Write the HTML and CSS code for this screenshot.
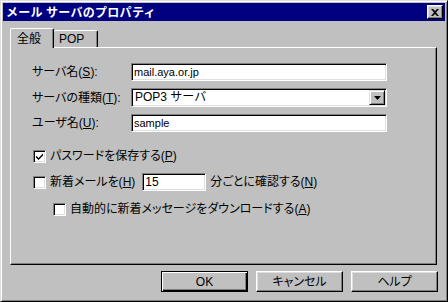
FILE: index.html
```html
<!DOCTYPE html>
<html lang="ja">
<head>
<meta charset="utf-8">
<link rel="stylesheet" href="styles.css">
</head>
<body>
<div class="window">
  <div class="titlebar">
    <span class="title">メール サーバのプロパティ</span>
    <span class="close"><svg width="8" height="7" viewBox="0 0 8 7"><path d="M0 0h2l2 2 2-2h2L5 3.5 8 7H6L4 5 2 7H0l3-3.5z" fill="#000"/></svg></span>
  </div>
  <div class="tabs">
    <div class="tab active">全般</div>
    <div class="tab">POP</div>
  </div>
  <div class="panel">
    <div class="fields">
      <span class="label">サーバ名(<u>S</u>):</span>
      <div class="input">mail.aya.or.jp</div>
      <span class="label">サーバの種類(<u>T</u>):</span>
      <div class="input select"><span class="seltext">POP3 サーバ</span><span class="drop"><svg width="7" height="4" viewBox="0 0 7 4"><path d="M0 0h7L3.5 4z" fill="#000"/></svg></span></div>
      <span class="label">ユーザ名(<u>U</u>):</span>
      <div class="input">sample</div>
    </div>
    <div class="check-row r1">
      <span class="box"><svg width="7" height="7" viewBox="0 0 7 7"><path d="M0 2.5l2.5 2.5L7 0.5v2L2.5 7 0 4.5z" fill="#000"/></svg></span>
      <span class="ctext">パスワードを保存する(<u>P</u>)</span>
    </div>
    <div class="check-row r2">
      <span class="box"></span>
      <span class="ctext">新着メールを(<u>H</u>)</span>
      <div class="input small">15</div>
      <span class="ctext after">分ごとに確認する(<u>N</u>)</span>
    </div>
    <div class="check-row r3">
      <span class="box"></span>
      <span class="ctext">自動的に新着メッセージをダウンロードする(<u>A</u>)</span>
    </div>
  </div>
  <div class="buttons">
    <div class="btn default"><span>OK</span></div>
    <div class="btn"><span class="jp">キャンセル</span></div>
    <div class="btn"><span class="jp">ヘルプ</span></div>
  </div>
</div>
</body>
</html>
```
FILE: styles.css
```css
* { box-sizing: border-box; }
html, body { margin: 0; padding: 0; background: #c0c0c0; }
body {
  font-family: "Liberation Sans", "Noto Sans CJK JP", sans-serif;
  font-size: 12px;
  color: #000;
}
.window {
  width: 448px;
  height: 302px;
  background: #c0c0c0;
  border: 1px solid;
  border-color: #dfdfdf #000 #000 #dfdfdf;
  box-shadow: inset 1px 1px #fff, inset -1px -1px #808080;
  padding: 2px;
  display: flex;
  flex-direction: column;
}
.titlebar {
  height: 18px;
  background: #000080;
  display: flex;
  align-items: center;
  justify-content: space-between;
  padding: 0 2px 0 3px;
}
.title {
  color: #fff;
  font-weight: bold;
  font-size: 12px;
  font-family: "Noto Sans CJK JP", sans-serif;
  line-height: 18px;
  letter-spacing: 0.3px;
}
.close {
  width: 16px;
  height: 14px;
  background: #c0c0c0;
  border: 1px solid;
  border-color: #fff #000 #000 #fff;
  box-shadow: inset -1px -1px #808080, inset 1px 1px #dfdfdf;
  display: flex;
  align-items: center;
  justify-content: center;
}
.close svg { display: block; }
.tabs {
  display: flex;
  align-items: flex-end;
  margin: 7px 0 0 7px;
  height: 19px;
  position: relative;
  z-index: 1;
}
.tab {
  height: 17px;
  border: 1px solid;
  border-bottom: none;
  border-color: #fff #000 #000 #fff;
  box-shadow: inset -1px 0 #808080;
  border-radius: 2px 2px 0 0;
  padding: 0 13px 0 5px;
  line-height: 16px;
  background: #c0c0c0;
}
.tab.active {
  height: 20px;
  margin-bottom: -1px;
  padding: 0 12px 0 6px;
  line-height: 17px;
  font-family: "Noto Sans CJK JP", sans-serif;
}
.tab.active + .tab { border-left: none; }
.panel {
  margin-left: 7px;
  width: 427px;
  height: 218px;
  border: 1px solid;
  border-color: #fff #000 #000 #fff;
  box-shadow: inset -1px -1px #808080;
  padding: 15px 0 0 21px;
}
.fields {
  display: grid;
  grid-template-columns: 99px 256px;
  grid-template-rows: 18px 19px 18px;
  row-gap: 7px;
  align-items: center;
}
.label { line-height: 16px; font-feature-settings: "palt"; }
.input {
  height: 18px;
  background: #fff;
  border: 1px solid;
  border-color: #808080 #fff #fff #808080;
  box-shadow: inset 1px 1px #000, inset -1px -1px #dfdfdf;
  padding: 0 2px;
  font-size: 11px;
  line-height: 16px;
  display: flex;
  align-items: center;
}
.select {
  height: 19px;
  padding: 1px 1px 1px 2px;
  justify-content: space-between;
  font-size: 12px;
}
.seltext { line-height: 15px; padding-left: 1px; }
.drop {
  width: 16px;
  height: 15px;
  background: #c0c0c0;
  border: 1px solid;
  border-color: #dfdfdf #000 #000 #dfdfdf;
  box-shadow: inset 1px 1px #fff, inset -1px -1px #808080;
  display: flex;
  align-items: center;
  justify-content: center;
}
.drop svg { display: block; }
.check-row {
  display: flex;
  align-items: center;
  height: 20px;
  padding-left: 1px;
}
.r1 { margin-top: 14px; }
.r2 { margin-top: 6px; }
.r3 { margin-top: 7px; padding-left: 21px; }
.box {
  width: 13px;
  height: 13px;
  background: #fff;
  border: 1px solid;
  border-color: #808080 #fff #fff #808080;
  box-shadow: inset 1px 1px #000, inset -1px -1px #dfdfdf;
  display: flex;
  align-items: center;
  justify-content: center;
  flex: none;
}
.box svg { display: block; }
.ctext {
  margin-left: 4px;
  line-height: 16px;
  white-space: nowrap;
  font-feature-settings: "palt";
}
.input.small {
  width: 64px;
  margin-left: 7px;
  font-size: 12px;
}
.ctext.after { margin-left: 4px; }
.buttons {
  display: flex;
  justify-content: flex-end;
  gap: 8px;
  margin: 6px 7px 0 0;
}
.btn {
  width: 87px;
  height: 21px;
  border: 1px solid;
  border-color: #fff #000 #000 #fff;
  box-shadow: inset -1px -1px #808080, inset 1px 1px #dfdfdf;
  display: flex;
  align-items: center;
  justify-content: center;
  line-height: 16px;
}
.btn .jp { font-feature-settings: "palt"; }
.btn.default {
  border-color: #000;
  box-shadow: inset 1px 1px #fff, inset -1px -1px #000, inset -2px -2px #808080;
}
u { text-decoration: underline; text-underline-offset: 1px; }
```
